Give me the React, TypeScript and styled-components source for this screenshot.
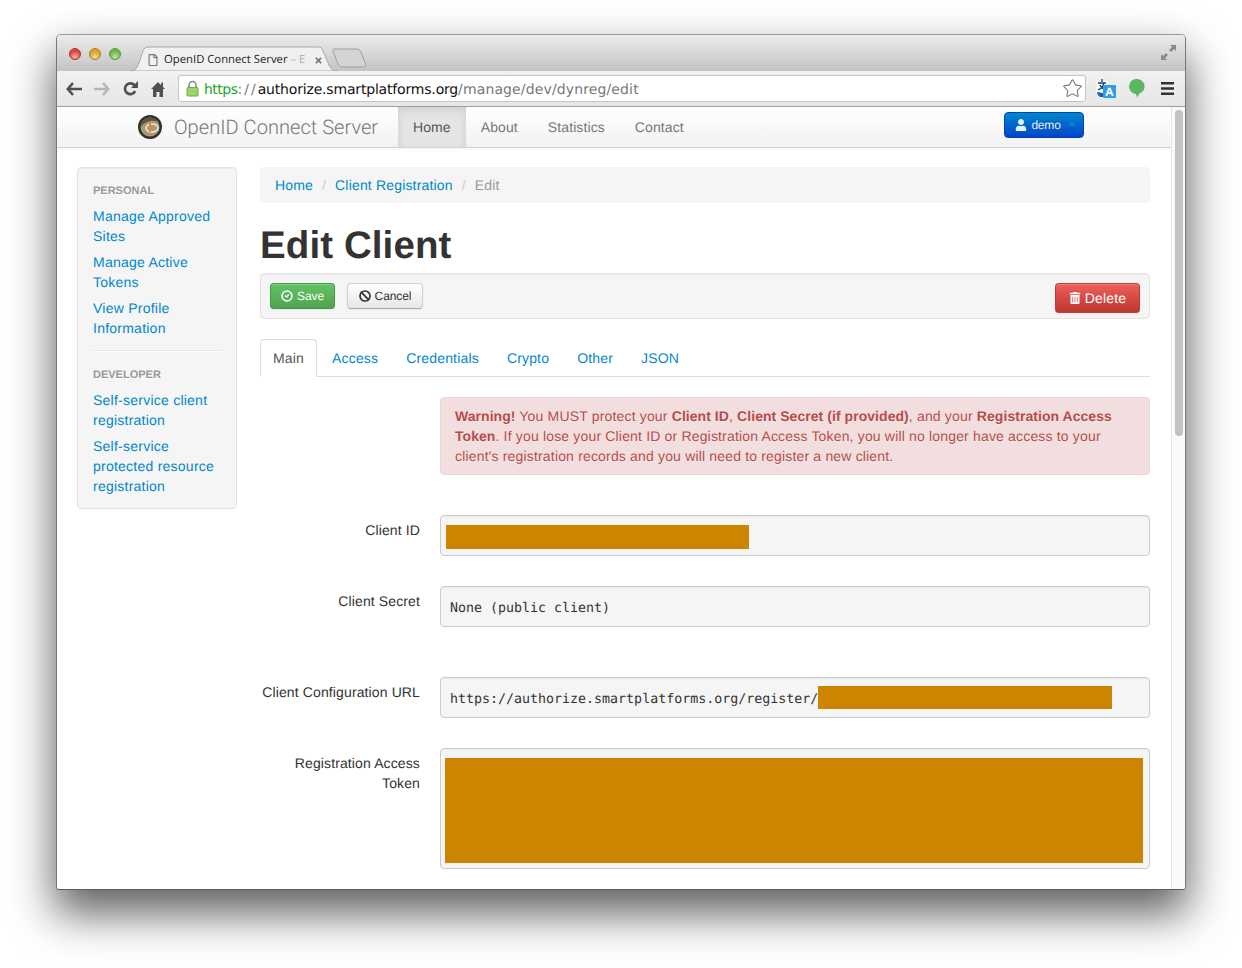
import styled, { createGlobalStyle } from "styled-components";
import { FaRegFile, FaTimes, FaTrashAlt, FaUser } from "react-icons/fa";
import { Ban, CircleCheck, Star } from "lucide-react";

const Global = createGlobalStyle`
  html, body {
    margin: 0;
    height: 968px;
    overflow: hidden;
    background: #fff;
  }
  * { box-sizing: border-box; }
  body {
    font-family: "Liberation Sans", Arial, sans-serif;
    font-size: 14px;
    line-height: 20px;
    letter-spacing: 0.17px;
    color: #333;
    text-rendering: geometricPrecision;
  }
  b { letter-spacing: 0.05px; }
`;

const Desktop = styled.div`
  padding: 34px 0 0 56px;
`;

const Win = styled.div`
  width: 1130px;
  height: 856px;
  display: flex;
  flex-direction: column;
  overflow: hidden;
  border-radius: 5px 5px 3px 3px;
  border: 1px solid #9a9a9a;
  border-bottom-color: #5c5c5c;
  border-right-color: #777;
  border-left-color: #777;
  box-shadow: 0 22px 44px 2px rgba(0, 0, 0, 0.62);
  background: #fff;
`;

const TitleBar = styled.div`
  height: 36px;
  flex: none;
  display: flex;
  align-items: flex-end;
  position: relative;
  background: linear-gradient(#ebebeb, #c4c4c4);
`;

const Lights = styled.div`
  display: flex;
  gap: 8px;
  padding: 0 0 11px 12px;
`;

const Light = styled.span<{ $c: string; $d: string }>`
  width: 12px;
  height: 12px;
  border-radius: 50%;
  border: 1px solid ${(p) => p.$d};
  background: radial-gradient(circle at 50% 80%, #fff9 0, transparent 60%), ${(p) => p.$c};
`;

const Tab = styled.div`
  position: relative;
  width: 210px;
  height: 25px;
  margin-left: 9px;
  padding: 3px 0 0 17px;
  display: flex;
  align-items: center;
  gap: 5px;
  font-family: "Open Sans", sans-serif;
  font-size: 11.3px;
  line-height: 16px;
  letter-spacing: 0;
  color: #222;
  svg.shape {
    position: absolute;
    left: 0;
    top: 0;
  }
`;

const TabText = styled.span`
  position: relative;
  width: 145px;
  white-space: nowrap;
  overflow: hidden;
`;

const Faded = styled.span`
  color: #aaa;
`;

const NewTab = styled.svg`
  margin: 0 0 3px -8px;
`;

const Expand = styled.svg`
  position: absolute;
  right: 9px;
  top: 10px;
`;

const ToolBar = styled.div`
  height: 36px;
  flex: none;
  display: flex;
  align-items: center;
  border-bottom: 1px solid #a0a0a0;
  background: linear-gradient(#f1f1f1, #e6e6e6);
`;

const NavIcon = styled.span`
  width: 28px;
  height: 20px;
  display: flex;
  align-items: center;
  justify-content: center;
`;

const NavIcons = styled.div`
  display: flex;
  padding-left: 3px;
`;

const Omnibox = styled.div`
  width: 908px;
  height: 27px;
  margin-left: 6px;
  padding: 0 2px 0 7px;
  display: flex;
  align-items: center;
  background: #fff;
  border: 1px solid #c4c4c4;
  border-radius: 3px;
  font-family: "DejaVu Sans", sans-serif;
  font-size: 14px;
  letter-spacing: 0.13px;
  white-space: nowrap;
`;

const Url = styled.span`
  margin-left: 5px;
  padding-top: 2px;
  flex: 1;
  color: #777;
`;

const Https = styled.span`
  color: #18a52a;
  letter-spacing: -0.5px;
`;

const Scheme = styled.span`
  letter-spacing: 2px;
`;

const Host = styled.span`
  color: #111;
  letter-spacing: -0.18px;
`;

const Extensions = styled.div`
  display: flex;
  align-items: center;
  margin-left: 10px;
  gap: 13px;
`;

const MenuIcon = styled.svg`
  margin-left: 3px;
`;

const Page = styled.div`
  flex: 1;
  min-height: 0;
  display: flex;
`;

const Content = styled.div`
  flex: 1;
  min-width: 0;
`;

const ScrollTrack = styled.div`
  width: 14px;
  flex: none;
  padding: 3px 3px 0 3px;
  background: #fafafa;
  border-left: 1px solid #e6e6e6;
`;

const ScrollThumb = styled.div`
  width: 8px;
  height: 326px;
  border-radius: 4px;
  background: #c2c2c2;
`;

const Navbar = styled.div`
  height: 41px;
  display: flex;
  padding: 0 87px 0 81px;
  border-bottom: 1px solid #d4d4d4;
  box-shadow: 0 1px 3px rgba(0, 0, 0, 0.05);
  background: linear-gradient(#fff, #f2f2f2);
`;

const Brand = styled.div`
  width: 260px;
  display: flex;
  align-items: center;
  gap: 12px;
  font-family: Roboto, "Liberation Sans", sans-serif;
  font-weight: 300;
  font-size: 20.1px;
  letter-spacing: 0;
  color: #777;
`;

const NavItem = styled.a<{ $active?: boolean }>`
  padding: 10px 15px;
  letter-spacing: 0.1px;
  color: ${(p) => (p.$active ? "#555" : "#777")};
  background: ${(p) => (p.$active ? "#e5e5e5" : "transparent")};
  box-shadow: ${(p) => (p.$active ? "inset 0 3px 8px rgba(0,0,0,0.1)" : "none")};
`;

const UserMenu = styled.a`
  margin: 5px 0 0 auto;
  width: 80px;
  height: 26px;
  padding-left: 3px;
  display: flex;
  align-items: center;
  justify-content: center;
  gap: 4px;
  border-radius: 4px;
  border: 1px solid #0044b0;
  background: linear-gradient(#0088cc, #0044cc);
  color: #e8f2ff;
  font-size: 12px;
  letter-spacing: -0.2px;
  text-shadow: 0 -1px 0 rgba(0, 0, 0, 0.25);
`;

const Caret = styled.span`
  margin-left: 3px;
  border: 4px solid transparent;
  border-top-color: #0f7fd8;
  border-bottom: 0;
`;

const Body = styled.div`
  display: flex;
  gap: 23px;
  padding: 19px 21px 0 20px;
`;

const Sidebar = styled.aside`
  width: 160px;
  height: 342px;
  flex: none;
  padding: 12px 15px 0;
  background: #f5f5f5;
  border: 1px solid #e3e3e3;
  border-radius: 4px;
  box-shadow: inset 0 1px 1px rgba(0, 0, 0, 0.05);
`;

const SideHeader = styled.div`
  height: 20px;
  padding-top: 1px;
  font-size: 11px;
  font-weight: bold;
  letter-spacing: 0;
  color: #999;
  text-transform: uppercase;
  text-shadow: 0 1px 0 rgba(255, 255, 255, 0.5);
`;

const SideLink = styled.a`
  display: block;
  margin-top: 6px;
  letter-spacing: 0.24px;
  color: #0088cc;
`;

const SideDivider = styled.div`
  height: 2px;
  margin: 12px 0 12px;
  background: #e5e5e5;
  border-bottom: 1px solid #fff;
`;

const Main = styled.main`
  width: 890px;
  flex: none;
`;

const Crumbs = styled.div`
  height: 36px;
  display: flex;
  align-items: center;
  padding: 0 15px;
  background: #f5f5f5;
  border-radius: 4px;
  color: #999;
`;

const Crumb = styled.a`
  color: #0088cc;
`;

const CrumbSep = styled.span`
  padding: 0 9px;
  color: #ccc;
`;

const Title = styled.h1`
  margin: 23px 0 7px;
  font-size: 38.5px;
  line-height: 40px;
  font-weight: bold;
  letter-spacing: 0.1px;
  color: #333;
`;

const Well = styled.div`
  height: 46px;
  padding: 9px 9px 0;
  display: flex;
  justify-content: space-between;
  align-items: flex-start;
  background: #f5f5f5;
  border: 1px solid #e3e3e3;
  border-radius: 4px;
  box-shadow: inset 0 1px 1px rgba(0, 0, 0, 0.05);
`;

const BtnGroup = styled.div`
  display: flex;
  gap: 12px;
`;

const Btn = styled.a<{ $kind: "save" | "cancel" | "delete" }>`
  display: flex;
  align-items: center;
  justify-content: center;
  gap: 4px;
  height: ${(p) => (p.$kind === "delete" ? "30px" : "26px")};
  width: ${(p) => (p.$kind === "save" ? "65px" : p.$kind === "cancel" ? "76px" : "85px")};
  border-radius: 4px;
  font-size: ${(p) => (p.$kind === "delete" ? "14px" : "12px")};
  letter-spacing: ${(p) => (p.$kind === "delete" ? "0.17px" : "-0.1px")};
  color: ${(p) => (p.$kind === "cancel" ? "#333" : "#fff")};
  border: 1px solid ${(p) => (p.$kind === "save" ? "#4a9a4a" : p.$kind === "cancel" ? "#d0d0d0" : "#b8403b")};
  border-bottom-color: ${(p) => (p.$kind === "cancel" ? "#aaa" : "rgba(0,0,0,0.25)")};
  background: ${(p) =>
    p.$kind === "save"
      ? "linear-gradient(#62c462, #51a351)"
      : p.$kind === "cancel"
        ? "linear-gradient(#fff, #e6e6e6)"
        : "linear-gradient(#ee5f5b, #bd362f)"};
  box-shadow: inset 0 1px 0 rgba(255, 255, 255, 0.2), 0 1px 2px rgba(0, 0, 0, 0.05);
`;

const Tabs = styled.div`
  margin-top: 20px;
  height: 38px;
  display: flex;
  gap: 2px;
  border-bottom: 1px solid #ddd;
`;

const TabLink = styled.a<{ $active?: boolean }>`
  height: ${(p) => (p.$active ? "38px" : "37px")};
  padding: 8px 12px 0;
  border: 1px solid ${(p) => (p.$active ? "#ddd" : "transparent")};
  border-bottom-color: ${(p) => (p.$active ? "#fff" : "transparent")};
  border-radius: 4px 4px 0 0;
  background: #fff;
  color: ${(p) => (p.$active ? "#555" : "#0088cc")};
`;

const Alert = styled.div`
  margin: 20px 0 0 180px;
  height: 78px;
  padding: 8px 35px 8px 14px;
  background: #f2dede;
  border: 1px solid #eed3d7;
  border-radius: 4px;
  color: #b94a48;
  text-shadow: 0 1px 0 rgba(255, 255, 255, 0.5);
`;

const FormRow = styled.div<{ $top: number }>`
  display: grid;
  grid-template-columns: 160px 710px;
  column-gap: 20px;
  margin-top: ${(p) => p.$top}px;
`;

const Label = styled.label`
  padding-top: 5px;
  text-align: right;
  letter-spacing: 0.12px;
`;

const Field = styled.div<{ $pad?: string }>`
  height: 41px;
  display: flex;
  align-items: center;
  padding: ${(p) => p.$pad ?? "0 9px"};
  background: #f5f5f5;
  border: 1px solid #ccc;
  border-radius: 4px;
  box-shadow: inset 0 1px 1px rgba(0, 0, 0, 0.05);
  font-family: "DejaVu Sans Mono", monospace;
  font-size: 13.3px;
  letter-spacing: 0;
  white-space: nowrap;
  color: #333;
`;

const Mono = styled.span`
  padding-top: 4px;
`;

const TextArea = styled.div`
  height: 121px;
  padding: 9px 6px 5px 4px;
  background: #f5f5f5;
  border: 1px solid #ccc;
  border-radius: 4px;
  box-shadow: inset 0 1px 1px rgba(0, 0, 0, 0.05);
`;

const Redacted = styled.div<{ $w?: number; $h: number }>`
  width: ${(p) => (p.$w ? `${p.$w}px` : "100%")};
  height: ${(p) => p.$h}px;
  background: #cc8500;
`;

function Logo() {
  return (
    <svg width="24" height="24" viewBox="0 0 24 24">
      <circle cx="12" cy="12" r="12" fill="#33302a" />
      <circle cx="12" cy="12" r="9.5" fill="#a8977a" />
      <path d="M2.6 12A9.4 9.4 0 0 1 12 2.6c3 0 6 1.6 7.6 4-6-2-13 0-17 5.4z" fill="#5d5540" />
      <ellipse cx="14" cy="13" rx="6" ry="4" fill="none" stroke="#f0ead8" strokeWidth="1.5" />
      <path d="M12 7v10" stroke="#e8861a" strokeWidth="2" />
    </svg>
  );
}

function Lock() {
  return (
    <svg width="13" height="17" viewBox="0 0 13 17">
      <path d="M3 8V5a3.5 3.5 0 0 1 7 0v3" fill="none" stroke="#8a8a8a" strokeWidth="1.6" />
      <rect x="1" y="7.5" width="11" height="8.5" rx="1" fill="#9bd46a" stroke="#6fae3e" />
    </svg>
  );
}

function Translate() {
  return (
    <svg width="20" height="19" viewBox="0 0 20 19">
      <rect x="0" y="1" width="13" height="14" fill="#fff" stroke="#e4e4e4" />
      <path d="M6 0v3M2 4h8M8 4c-1 4-3 6-6 7M4 6c1 3 3 4 5 5" fill="none" stroke="#16406e" strokeWidth="1.3" />
      <rect x="7" y="6" width="13" height="13" rx="1" fill="#2f9fe8" />
      <text x="13.5" y="17" textAnchor="middle" fontFamily="Liberation Sans" fontSize="12" fontWeight="bold" fill="#fff">A</text>
      <path d="M1 13a5 5 0 0 0 6 5v-4z" fill="#1a5fa8" />
    </svg>
  );
}

function Balloon() {
  return (
    <svg width="16" height="19" viewBox="0 0 16 19">
      <path d="M8 0a7.5 7.5 0 0 1 2.5 14.6L8 18.5 7 15A7.5 7.5 0 0 1 8 0z" fill="#5cb763" />
    </svg>
  );
}

function BackArrow() {
  return (
    <svg width="16" height="14" viewBox="0 0 16 14">
      <path d="M7 1 1.8 7 7 13M2 7h14" fill="none" stroke="#505050" strokeWidth="2.6" />
    </svg>
  );
}

function ForwardArrow() {
  return (
    <svg width="16" height="14" viewBox="0 0 16 14">
      <path d="M9 1l5.2 6L9 13M14 7H0" fill="none" stroke="#b6b6b6" strokeWidth="2.6" />
    </svg>
  );
}

function Reload() {
  return (
    <svg width="15" height="15" viewBox="0 0 15 15">
      <path d="M12.2 10.2a5.4 5.4 0 1 1-.4-5.6" fill="none" stroke="#505050" strokeWidth="2.7" />
      <path d="M15 0v7H8z" fill="#505050" />
    </svg>
  );
}

function HomeIcon() {
  return (
    <svg width="14" height="16" viewBox="0 0 14 16">
      <path d="M7 1 0 8h2v8h3.5v-5h3v5H12V8h2l-2-2V1.500h-1.800V4.200z" fill="#505050" />
    </svg>
  );
}

export default function App() {
  return (
    <Desktop>
      <Global />
      <Win>
        <TitleBar>
          <Lights>
            <Light $c="#e0443e" $d="#b03530" />
            <Light $c="#dea123" $d="#b08020" />
            <Light $c="#6cb84a" $d="#569a3a" />
          </Lights>
          <Tab>
            <svg className="shape" width="210" height="25" viewBox="0 0 210 25">
              <path d="M0 25c6 0 7-3 9-8l4-12c1-3 3-4 6-4h169c3 0 4 1 5 4l6 14c2 4 4 6 9 6z" fill="#f0f0f0" stroke="#a8a8a8" />
            </svg>
            <FaRegFile size={12} color="#777" style={{ position: "relative" }} />
            <TabText>
              OpenID Connect Server <Faded>– E</Faded>
            </TabText>
            <FaTimes size={9} color="#777" style={{ position: "relative" }} />
          </Tab>
          <NewTab width="36" height="20" viewBox="0 0 36 20">
            <path d="M2 1h22c3 0 4 1 5 3l5 13c0 1-1 2-2 2H10c-2 0-3-1-4-3L1 3c0-1 0-2 1-2z" fill="#d4d4d4" stroke="#9c9c9c" />
          </NewTab>
          <Expand width="15" height="15" viewBox="0 0 15 15">
            <path d="M9 0h6v6l-2-2-3 3-2-2 3-3zM0 9l2 2 3-3 2 2-3 3 2 2H0z" fill="#8a8a8a" />
          </Expand>
        </TitleBar>
        <ToolBar>
          <NavIcons>
            <NavIcon><BackArrow /></NavIcon>
            <NavIcon><ForwardArrow /></NavIcon>
            <NavIcon><Reload /></NavIcon>
            <NavIcon><HomeIcon /></NavIcon>
          </NavIcons>
          <Omnibox>
            <Lock />
            <Url>
              <Https>https</Https><Scheme>://</Scheme><Host>authorize.smartplatforms.org</Host>/manage/dev/dynreg/edit
            </Url>
            <Star size={21} color="#777" strokeWidth={1.2} />
          </Omnibox>
          <Extensions>
            <Translate />
            <Balloon />
            <MenuIcon width="13" height="13" viewBox="0 0 13 13">
              <path d="M0 0h13v2.600H0zM0 5.200h13v2.600H0zM0 10.400h13V13H0z" fill="#333" />
            </MenuIcon>
          </Extensions>
        </ToolBar>
        <Page>
          <Content>
            <Navbar>
              <Brand>
                <Logo />
                OpenID Connect Server
              </Brand>
              <NavItem $active>Home</NavItem>
              <NavItem>About</NavItem>
              <NavItem>Statistics</NavItem>
              <NavItem>Contact</NavItem>
              <UserMenu>
                <FaUser size={12} />
                demo
                <Caret />
              </UserMenu>
            </Navbar>
            <Body>
              <Sidebar>
                <SideHeader>Personal</SideHeader>
                <SideLink>Manage Approved Sites</SideLink>
                <SideLink>Manage Active Tokens</SideLink>
                <SideLink>View Profile Information</SideLink>
                <SideDivider />
                <SideHeader>Developer</SideHeader>
                <SideLink>Self-service client registration</SideLink>
                <SideLink>Self-service protected resource registration</SideLink>
              </Sidebar>
              <Main>
                <Crumbs>
                  <Crumb>Home</Crumb>
                  <CrumbSep>/</CrumbSep>
                  <Crumb>Client Registration</Crumb>
                  <CrumbSep>/</CrumbSep>
                  Edit
                </Crumbs>
                <Title>Edit Client</Title>
                <Well>
                  <BtnGroup>
                    <Btn $kind="save"><CircleCheck size={12} strokeWidth={3} /> Save</Btn>
                    <Btn $kind="cancel"><Ban size={12} strokeWidth={3.4} /> Cancel</Btn>
                  </BtnGroup>
                  <Btn $kind="delete"><FaTrashAlt size={12} /> Delete</Btn>
                </Well>
                <Tabs>
                  <TabLink $active>Main</TabLink>
                  <TabLink>Access</TabLink>
                  <TabLink>Credentials</TabLink>
                  <TabLink>Crypto</TabLink>
                  <TabLink>Other</TabLink>
                  <TabLink>JSON</TabLink>
                </Tabs>
                <Alert>
                  <b>Warning!</b> You MUST protect your <b>Client ID</b>, <b>Client Secret (if provided)</b>, and your{" "}
                  <b>Registration Access Token</b>. If you lose your Client ID or Registration Access Token, you will no
                  longer have access to your client's registration records and you will need to register a new client.
                </Alert>
                <FormRow $top={40}>
                  <Label>Client ID</Label>
                  <Field $pad="3px 5px 0"><Redacted $w={303} $h={24} /></Field>
                </FormRow>
                <FormRow $top={30}>
                  <Label>Client Secret</Label>
                  <Field><Mono>None (public client)</Mono></Field>
                </FormRow>
                <FormRow $top={50}>
                  <Label>Client Configuration URL</Label>
                  <Field>
                    <Mono>https://authorize.smartplatforms.org/register/</Mono>
                    <Redacted $w={294} $h={23} />
                  </Field>
                </FormRow>
                <FormRow $top={30}>
                  <Label>Registration Access Token</Label>
                  <TextArea><Redacted $h={105} /></TextArea>
                </FormRow>
              </Main>
            </Body>
          </Content>
          <ScrollTrack><ScrollThumb /></ScrollTrack>
        </Page>
      </Win>
    </Desktop>
  );
}
